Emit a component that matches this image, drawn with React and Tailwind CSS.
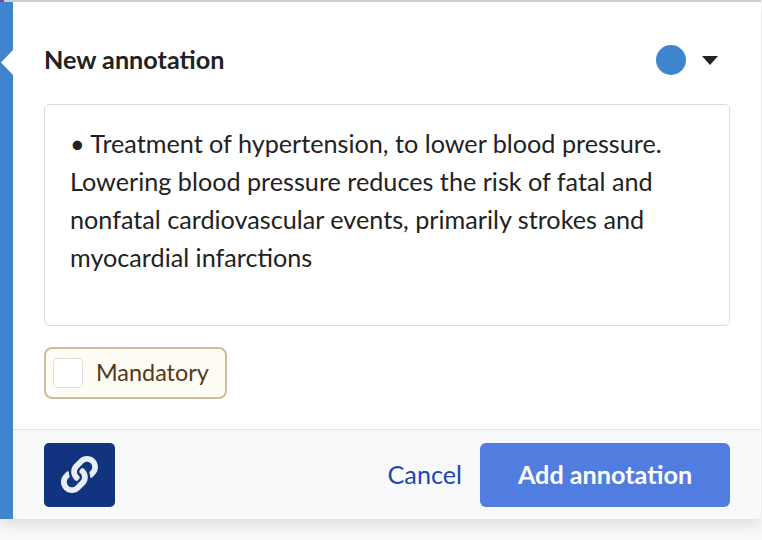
import { FaLink } from 'react-icons/fa';

export default function App() {
  return (
    <div className="h-[540px] w-[762px] overflow-hidden bg-[#fafafa] font-['Lato',sans-serif]">
      <div className="relative flex h-[519px] w-[761px] flex-col border-t-2 border-[#cccccc] bg-white pl-[13px] shadow-[0_6px_16px_rgba(0,0,0,0.12)]">
        {/* blue stripe and its notch */}
        <div className="absolute top-0 bottom-0 left-0 w-[13px] bg-[#3f85cd]" />
        <div className="absolute -top-[2px] left-0 h-[2px] w-[4px] bg-[#8a3ab0]" />
        <div className="absolute top-[48px] left-[1px] h-[25px] w-[12px] bg-white [clip-path:polygon(100%_0,0_50%,100%_100%)]" />

        <div className="flex flex-1 flex-col pt-[37px] pr-[31px] pl-[31px]">
          <div className="flex h-[42px] items-center justify-between">
            <h2 className="text-[25.2px] font-bold text-[#222222]">New annotation</h2>
            <div className="flex items-center gap-[16px] pr-[12px]">
              <span className="h-[30px] w-[30px] rounded-full bg-[#3f85cd]" />
              <svg width="16" height="9" viewBox="0 0 16 9" className="fill-[#222222]">
                <path d="M0 0h16L8 9z" />
              </svg>
            </div>
          </div>
          <div className="mt-[23px] h-[222px] rounded-[5px] border border-[#dddddd] px-[25px] pt-[19px] text-[25.2px] leading-[38px] text-[#222222]">
            <p>• Treatment of hypertension, to lower blood pressure.</p>
            <p>Lowering blood pressure reduces the risk of fatal and</p>
            <p>nonfatal cardiovascular events, primarily strokes and</p>
            <p>myocardial infarctions</p>
          </div>
          <label className="mt-[21px] flex h-[52px] w-[183px] items-center gap-[13px] rounded-[8px] border-2 border-[#cdbd9c] bg-[#fffbf5] pl-[7px] text-[23.4px] text-[#52391a]">
            <span className="h-[30px] w-[30px] rounded-[5px] border border-[#dddddd] bg-white" />
            <span>Mandatory</span>
          </label>
        </div>

        <div className="flex h-[90px] items-center justify-between border-t border-[#e3e3e3] bg-[#f8f9fb] pr-[31px] pl-[31px]">
          <button className="flex h-[64px] w-[71px] items-center justify-center rounded-[5px] bg-[#12337f] text-[#e9edf6]">
            <FaLink size={37} />
          </button>
          <div className="flex items-center gap-[18px]">
            <a className="text-[25.2px] text-[#1e46b4]">Cancel</a>
            <button className="h-[64px] w-[250px] rounded-[6px] bg-[#527de0] text-[25.2px] font-bold text-white">
              Add annotation
            </button>
          </div>
        </div>
      </div>
    </div>
  );
}
